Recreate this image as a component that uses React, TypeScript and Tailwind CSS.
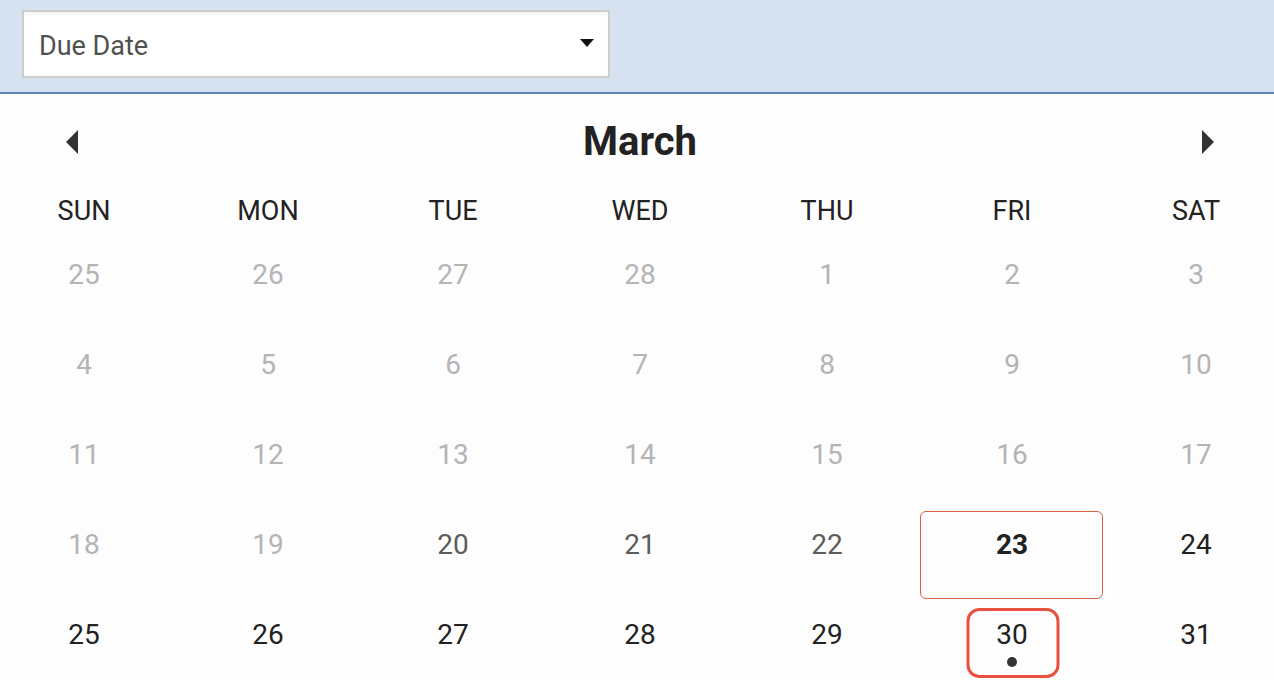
import React from "react";

type Cell = { d: number; tone: "light" | "mid" | "dark" | "today" | "selected" };

const rows: Cell[][] = [
  [25, 26, 27, 28, 1, 2, 3].map((d) => ({ d, tone: "light" as const })),
  [4, 5, 6, 7, 8, 9, 10].map((d) => ({ d, tone: "light" as const })),
  [11, 12, 13, 14, 15, 16, 17].map((d) => ({ d, tone: "light" as const })),
  [
    { d: 18, tone: "light" },
    { d: 19, tone: "light" },
    { d: 20, tone: "mid" },
    { d: 21, tone: "mid" },
    { d: 22, tone: "mid" },
    { d: 23, tone: "today" },
    { d: 24, tone: "dark" },
  ],
  [
    { d: 25, tone: "dark" },
    { d: 26, tone: "dark" },
    { d: 27, tone: "dark" },
    { d: 28, tone: "dark" },
    { d: 29, tone: "dark" },
    { d: 30, tone: "selected" },
    { d: 31, tone: "dark" },
  ],
];

const days = ["SUN", "MON", "TUE", "WED", "THU", "FRI", "SAT"];

const gridCols = "grid grid-cols-[184px_184px_186px_188px_186px_184px_184px]";

function DayCell({ c }: { c: Cell }) {
  const color =
    c.tone === "light"
      ? "text-[#b4b4b4]"
      : c.tone === "mid"
      ? "text-[#5c5c5c]"
      : "text-[#222222]";
  return (
    <div className="relative h-[90px] flex justify-center">
      {c.tone === "today" && (
        <div className="absolute left-0 right-[1px] top-[2px] bottom-0 rounded-[6px] border-[1.5px] border-[#d6603f]" />
      )}
      {c.tone === "selected" && (
        <div className="absolute left-1/2 -translate-x-1/2 ml-[1px] top-[9px] w-[93px] h-[70px] rounded-[13px] border-[3px] border-[#ea5040]" />
      )}
      <span
        className={`relative pt-[21px] text-[28px] leading-[30px] ${color} ${
          c.tone === "today" ? "font-bold" : "font-normal"
        }`}
      >
        {c.d}
      </span>
      {c.tone === "selected" && (
        <div className="absolute left-1/2 -translate-x-1/2 top-[58px] w-[10px] h-[10px] rounded-full bg-[#333333]" />
      )}
    </div>
  );
}

export default function App() {
  return (
    <div
      className="w-[1274px] h-[680px] overflow-hidden bg-[#fdfdfd]"
      style={{ fontFamily: "Roboto, 'Noto Sans', sans-serif" }}
    >
      <div className="h-[94px] bg-[#d6e2f0] border-b-2 border-[#5b87c0] pt-[10px] pl-[22px]">
        <div className="w-[588px] h-[68px] bg-white border-2 border-[#cccccc] flex items-center justify-between pl-[15px] pr-[14px] shadow-[inset_0_3px_3px_rgba(0,0,0,0.04)]">
          <span className="text-[27px] leading-none text-[#505050] mt-[5px]">Due Date</span>
          <svg width="14" height="8" viewBox="0 0 14 8" className="mb-[2px]">
            <path d="M0 0 L14 0 L7 8 Z" fill="#111111" />
          </svg>
        </div>
      </div>

      <div className="h-[96px] flex items-center justify-between pl-[66px] pr-[60px]">
        <svg width="12" height="24" viewBox="0 0 12 24">
          <path d="M12 0 L0 12 L12 24 Z" fill="#333333" />
        </svg>
        <span className="text-[40px] font-bold text-[#222222] leading-none">March</span>
        <svg width="12" height="24" viewBox="0 0 12 24">
          <path d="M0 0 L12 12 L0 24 Z" fill="#333333" />
        </svg>
      </div>

      <div className="w-[1296px] -ml-[8px]">
        <div className={`${gridCols} h-[49px]`}>
          {days.map((d) => (
            <div key={d} className="flex justify-center pt-[6px] text-[27px] leading-[30px] text-[#222222]">
              {d}
            </div>
          ))}
        </div>
        {rows.map((r, i) => (
          <div key={i} className={gridCols}>
            {r.map((c, j) => (
              <DayCell key={j} c={c} />
            ))}
          </div>
        ))}
      </div>
    </div>
  );
}
